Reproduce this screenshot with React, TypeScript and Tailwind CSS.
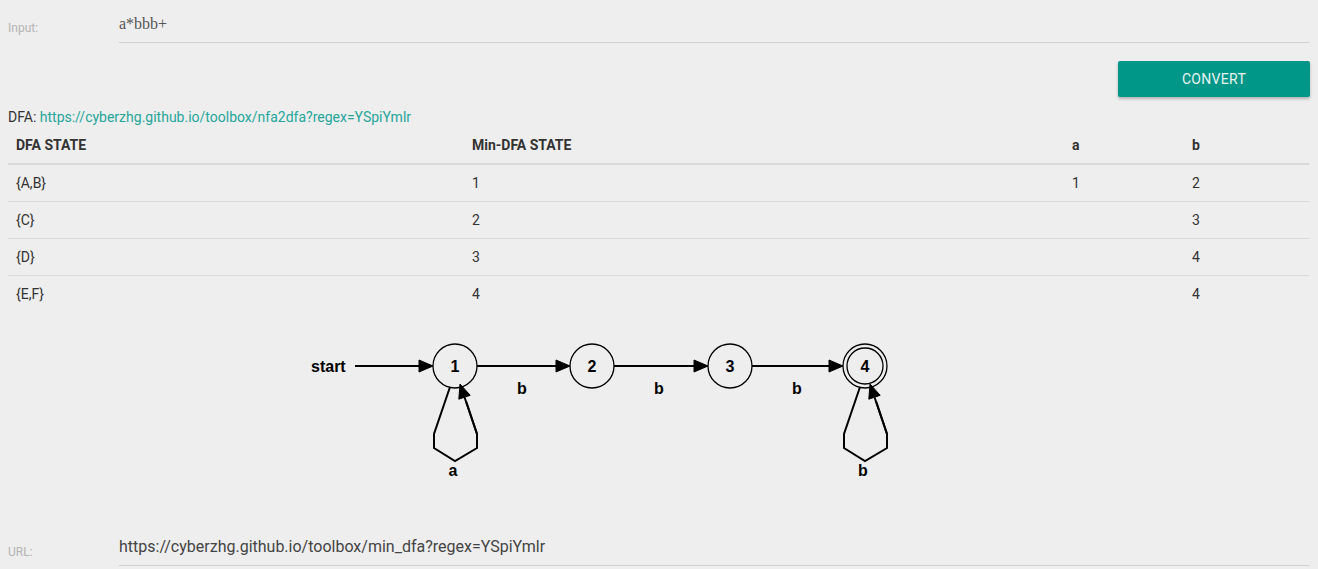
import React from "react";

const ROWS = [
  { dfa: "{A,B}", min: "1", a: "1", b: "2" },
  { dfa: "{C}", min: "2", a: "", b: "3" },
  { dfa: "{D}", min: "3", a: "", b: "4" },
  { dfa: "{E,F}", min: "4", a: "", b: "4" },
];

// graph coordinates: page x, y relative to the top of the svg
const NODES = [
  { id: "1", x: 455, final: false },
  { id: "2", x: 592, final: false },
  { id: "3", x: 730, final: false },
  { id: "4", x: 865, final: true },
];
const NY = 54;

function Arrow({ tip, from }: { tip: [number, number]; from: [number, number] }) {
  const dx = tip[0] - from[0];
  const dy = tip[1] - from[1];
  const len = Math.hypot(dx, dy);
  const ux = dx / len;
  const uy = dy / len;
  const bx = tip[0] - ux * 14;
  const by = tip[1] - uy * 14;
  const px = -uy * 6;
  const py = ux * 6;
  return (
    <>
      <line x1={from[0]} y1={from[1]} x2={bx} y2={by} stroke="black" strokeWidth={2} />
      <polygon
        points={`${tip[0]},${tip[1]} ${bx + px},${by + py} ${bx - px},${by - py}`}
        fill="black"
        stroke="black"
        strokeWidth={1}
      />
    </>
  );
}

function SelfLoop({ cx, label }: { cx: number; label: string }) {
  const o = cx - 455;
  const d = NY - 52;
  const pts = [
    [450, 73],
    [434, 120],
    [434, 134],
    [455, 147],
    [477, 134],
    [477, 120],
    [466, 87],
  ]
    .map(([x, y]) => `${x + o},${y + d}`)
    .join(" ");
  return (
    <>
      <polyline points={pts} fill="none" stroke="black" strokeWidth={2} strokeLinejoin="miter" />
      <Arrow from={[477 + o, 120 + d]} tip={[460 + o, 70 + d]} />
      <text x={cx - 2} y={162 + d} textAnchor="middle" fontSize={16} fontWeight={700} fill="black">
        {label}
      </text>
    </>
  );
}

function Graph() {
  return (
    <svg width={1318} height={210} className="block">
      <g fontFamily="'Liberation Sans', Arial, sans-serif">
        <text x={311} y={NY + 6} fontSize={16} fontWeight={700} fill="black">
          start
        </text>
        <Arrow from={[355, NY]} tip={[433, NY]} />
        <Arrow from={[477, NY]} tip={[570, NY]} />
        <Arrow from={[614, NY]} tip={[708, NY]} />
        <Arrow from={[752, NY]} tip={[843, NY]} />
        {[522, 659, 797].map((x) => (
          <text key={x} x={x} y={NY + 28} textAnchor="middle" fontSize={16} fontWeight={700} fill="black">
            b
          </text>
        ))}
        <SelfLoop cx={455} label="a" />
        <SelfLoop cx={865} label="b" />
        {NODES.map((n) => (
          <g key={n.id}>
            <circle cx={n.x} cy={NY} r={22} fill="none" stroke="black" strokeWidth={1.3} />
            {n.final && <circle cx={n.x} cy={NY} r={18} fill="none" stroke="black" strokeWidth={1.3} />}
            <text x={n.x} y={NY + 6} textAnchor="middle" fontSize={16} fontWeight={700} fill="black">
              {n.id}
            </text>
          </g>
        ))}
      </g>
    </svg>
  );
}

export default function App() {
  return (
    <div className="min-h-[569px] w-[1318px] bg-[#eeeeee] font-['Roboto',_'Liberation_Sans',_sans-serif] text-[rgba(0,0,0,0.87)]">
      {/* input row */}
      <div className="flex pl-2 pr-[9px]">
        <div className="w-[111px] pt-[19px] text-[12px] text-[#b4b4b4]">Input:</div>
        <div className="flex h-[43px] flex-1 items-center border-b border-[#cfcfcf] pt-[6px] font-['Liberation_Serif',_serif] text-[16px] text-[#555]">
          a*bbb+
        </div>
      </div>

      {/* button */}
      <div className="flex justify-end pt-[18px] pr-2">
        <button className="h-9 w-[192px] rounded-[2px] bg-[#009688] text-[14px] tracking-[0.3px] text-[#e6f4f2] shadow-[0_2px_3px_rgba(0,0,0,0.25)]">
          CONVERT
        </button>
      </div>

      {/* dfa link */}
      <div className="mt-[10px] px-2 text-[14px] leading-5 text-[#333]">
        DFA: <span className="text-[#26a69a]">https://cyberzhg.github.io/toolbox/nfa2dfa?regex=YSpiYmlr</span>
      </div>

      {/* table */}
      <div className="px-2 pr-[9px]">
        <table className="w-full border-collapse text-left text-[14px] text-[#333]">
          <thead>
            <tr className="border-b-2 border-[#d9d9d9]">
              <th className="h-[37px] w-[456px] px-2 font-bold">DFA STATE</th>
              <th className="h-[37px] w-[600px] px-2 font-bold">Min-DFA STATE</th>
              <th className="h-[37px] w-[120px] px-2 font-bold">a</th>
              <th className="h-[37px] px-2 font-bold">b</th>
            </tr>
          </thead>
          <tbody>
            {ROWS.map((r, i) => (
              <tr key={i} className={i < ROWS.length - 1 ? "border-b border-[#dadada]" : ""}>
                <td className="h-[37px] px-2 pt-[2px]">{r.dfa}</td>
                <td className="h-[37px] px-2 pt-[2px]">{r.min}</td>
                <td className="h-[37px] px-2 pt-[2px]">{r.a}</td>
                <td className="h-[37px] px-2 pt-[2px]">{r.b}</td>
              </tr>
            ))}
          </tbody>
        </table>
      </div>

      <Graph />

      {/* url row */}
      <div className="flex pl-2 pr-[9px]">
        <div className="w-[111px] pt-[21px] text-[12px] text-[#b4b4b4]">URL:</div>
        <div className="flex h-[44px] flex-1 items-center border-b border-[#cfcfcf] pt-[6px] text-[16px] text-[#444]">
          https://cyberzhg.github.io/toolbox/min_dfa?regex=YSpiYmlr
        </div>
      </div>
    </div>
  );
}
